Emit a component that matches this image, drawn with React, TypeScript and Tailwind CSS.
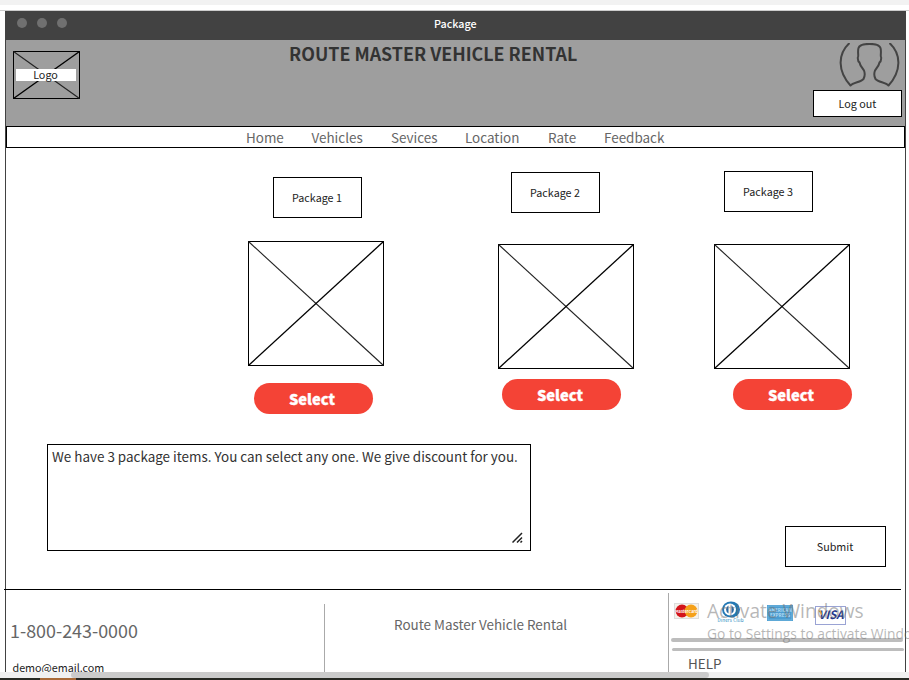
import React from "react";

const CrossBox = ({ className, w, h }: { className: string; w: number; h: number }) => (
  <svg className={className} width={w} height={h} viewBox={`0 0 ${w} ${h}`} fill="none" stroke="#000">
    <rect x="0.5" y="0.5" width={w - 1} height={h - 1} />
    <path d={`M0.5 0.5L${w - 0.5} ${h - 0.5}`} stroke="#222" strokeWidth="1.1" />
    <path d={`M${w - 0.5} 0.5L0.5 ${h - 0.5}`} strokeWidth="1.3" />
  </svg>
);

const packages = [
  { name: "Package 1", col: "ml-[242px] pt-[29px]", label: "ml-[25px]", img: "mt-[23px]", btn: "mt-[17px] ml-[6px]" },
  { name: "Package 2", col: "ml-[114px] pt-[24px]", label: "ml-[13px]", img: "mt-[31px]", btn: "mt-[10px] ml-[4px]" },
  { name: "Package 3", col: "ml-[80px] pt-[23px]", label: "ml-[10px]", img: "mt-[32px]", btn: "mt-[10px] ml-[19px]" },
];

const navItems = [
  { name: "Home", cls: "w-[65.5px]" },
  { name: "Vehicles", cls: "w-[79.5px]" },
  { name: "Sevices", cls: "w-[74px]" },
  { name: "Location", cls: "w-[83px]" },
  { name: "Rate", cls: "w-[56px]" },
  { name: "Feedback", cls: "w-[70px]" },
];

const TitleBar = () => (
  <div className="flex h-[29px] items-start bg-[#424242] pl-[10.5px] pt-[7px]">
    <div className="flex gap-[10px]">
      <i className="size-[10px] rounded-full bg-[#707070]" />
      <i className="size-[10px] rounded-full bg-[#707070]" />
      <i className="size-[10px] rounded-full bg-[#707070]" />
    </div>
    <div className="ml-[367.5px] -mt-[3px] h-[18px] text-[10.75px] font-medium leading-[18px] text-white">Package</div>
  </div>
);

const Header = () => (
  <header className="flex h-[86px] bg-[#9e9e9e]">
    <div className="relative ml-[7px] mt-[11px] h-[48px] w-[67px]">
      <CrossBox className="block" w={67} h={48} />
      <div className="absolute left-[3px] top-[18px] h-[12px] w-[60px] bg-white pr-[1px] text-center text-[10.75px] leading-[12px] text-[#222]">Logo</div>
    </div>
    <h1 className="mt-[1px] ml-[209px] h-[24px] text-[17.85px] font-bold leading-[24px] text-[#333]">ROUTE MASTER VEHICLE RENTAL</h1>
    <div className="mr-[3px] ml-auto flex w-[89px] flex-col">
      <svg className="ml-[26px] mt-[3px] block" width="61" height="44" viewBox="0 0 61 44" fill="none" stroke="#444" strokeWidth="2" strokeLinejoin="round">
        <path d="M10.500 0C-1.500 11-1.500 28 11.500 42.500C14 39.500 22 39 24.500 36C25.500 34 26 30 25 27.500C23 24.500 21 22.500 20.500 19.500C18.500 18.500 19 16.500 18.800 14.500C20 13 18.300 9 19.500 5C20.500 1.500 25 0.900 30.500 0.900C36 0.900 40.500 1.500 41.500 5C42.700 9 41 13 42.200 14.500C42 16.500 42.500 18.500 40.500 19.500C40 22.500 38 24.500 36 27.500C35 30 35.500 34 36.500 36C39 39 47 39.500 49.500 42.500C62.500 28 62.500 11 50.500 0" />
      </svg>
      <button className="mt-[3px] h-[27px] w-[89px] border border-black bg-white text-[10.75px] leading-[24px] text-[#222]">Log out</button>
    </div>
  </header>
);

const Cards = () => (
  <svg className="ml-[5px] block" width="180" height="26" viewBox="0 0 180 26">
    <rect x="0.500" y="2.500" width="24" height="15" fill="#f5f1ea" stroke="#ddd" />
    <circle cx="8" cy="10" r="6.500" fill="#d3141b" />
    <circle cx="17" cy="10" r="6.500" fill="#f5a11a" />
    <text x="12.500" y="11.500" fontSize="4" fontWeight="bold" fill="#fff" textAnchor="middle">MasterCard</text>
    <ellipse cx="57" cy="8.500" rx="9" ry="8" fill="#2479b5" />
    <circle cx="56" cy="8.500" r="6" fill="#fff" />
    <path d="M54.500 4.500A4.500 4.500 0 0 0 54.500 12.500ZM57.500 4.500A4.500 4.500 0 0 1 57.500 12.500Z" fill="#2868a0" />
    <text x="56.500" y="20.500" fontSize="4.500" fill="#258ac0" textAnchor="middle" textLength="26">Diners Club</text>
    <rect x="93" y="4" width="26" height="16" fill="#4b9dd1" />
    <rect x="94" y="5" width="24" height="14" fill="none" stroke="#83bfe2" strokeWidth="0.700" />
    <text x="106" y="11" fontSize="4.500" fontWeight="bold" fill="#b9def1" textAnchor="middle">AMERICAN</text>
    <text x="106" y="16" fontSize="4.500" fontWeight="bold" fill="#b9def1" textAnchor="middle">EXPRESS</text>
    <rect x="141.500" y="5.500" width="30" height="18" fill="#fff" stroke="#9aa3d4" />
    <text x="157" y="18" fontSize="11.500" fontWeight="bold" fontStyle="italic" fill="#25378d" textAnchor="middle" textLength="25" lengthAdjust="spacingAndGlyphs">VISA</text>
    <path d="M144 9.500L147 9.500L148.500 15Z" fill="#e9a33a" />
  </svg>
);

export default function App() {
  return (
    <div className="relative flex h-[680px] w-[909px] flex-col overflow-hidden whitespace-nowrap bg-white font-['Noto_Sans_CJK_SC',sans-serif]">
      <div className="h-[5px] shrink-0 bg-[#f2f2f2]" />
      <div className="mt-[5px] h-px shrink-0 bg-[#ccc]" />
      <div className="ml-[5px] flex h-[661px] w-[901px] shrink-0 flex-col border-x border-[#424242]">
        <TitleBar />
        <Header />
        <nav className="flex h-[22px] border border-black pl-[239px] text-[13.45px] leading-[21px] text-[#666]">
          {navItems.map((n) => (
            <a key={n.name} className={`${n.cls} shrink-0`}>{n.name}</a>
          ))}
        </nav>
        <main className="flex h-[441px] flex-col">
          <section className="flex h-[296px] items-start">
            {packages.map((p) => (
              <div key={p.name} className={`${p.col} w-[136px] shrink-0`}>
                <div className={`${p.label} flex h-[41px] w-[89px] items-center justify-center border border-black pr-[1px] pt-[2px] text-[10.75px] text-[#222]`}>{p.name}</div>
                <CrossBox className={`${p.img} block`} w={136} h={125} />
                <button className={`${p.btn} block h-[31px] w-[119px] rounded-full bg-[#f44336] pr-[3px] text-[14.7px] font-black leading-[31px] text-white [-webkit-text-stroke:0.3px_white]`}>Select</button>
              </div>
            ))}
          </section>
          <section className="flex items-start">
            <div className="ml-[41px] flex h-[107px] w-[484px] flex-col justify-between border border-black pl-[4px] text-[13.45px] leading-[23px] text-[#333]">
              <p>We have 3 package items. You can select any one. We give discount for you.</p>
              <svg className="mb-[7px] mr-[7px] self-end" width="11" height="11" viewBox="0 0 11 11" stroke="#222" strokeWidth="1.500">
                <path d="M0.500 10.500L10 1M5 10.500L10 5.500M8.500 10.500L10 9" />
              </svg>
            </div>
            <button className="ml-[254px] mt-[82px] h-[41px] w-[101px] border border-black pr-[1px] pt-[2px] text-[10.75px] text-[#222]">Submit</button>
          </section>
        </main>
        <footer className="-ml-[2px] flex h-[83px] w-[903px] flex-col">
          <div className="h-px w-[897px] bg-black" />
          <div className="flex h-[82px]">
            <div className="w-[320px] pl-[6px] pt-[26px]">
              <div className="h-[28px] text-[17.9px] leading-[28px] text-[#666]">1-800-243-0000</div>
              <div className="ml-[2.5px] mt-[14px] h-[20px] text-[10.75px] leading-[20px] text-[#222]">demo@email.com</div>
            </div>
            <div className="mt-[14px] h-[68px] w-px bg-[#aaa]" />
            <div className="w-[343px] pl-[69px] pt-[23px] text-[13.45px] leading-[23px] text-[#666]">Route Master Vehicle Rental</div>
            <div className="mt-[3px] h-[79px] w-px bg-[#aaa]" />
            <div className="w-[238px] pt-[11px]">
              <Cards />
              <div className="ml-[2px] mt-[11px] h-[4px] w-[232px] rounded-full bg-[#bdbdbd]" />
              <div className="ml-[3px] mt-[6px] h-[3px] w-[232px] rounded-full bg-[#bdbdbd]" />
              <div className="ml-[19px] mt-[1px] h-[22px] text-[13.45px] leading-[22px] text-[#555]">HELP</div>
            </div>
          </div>
        </footer>
      </div>
      <div className="z-10 h-[6px] shrink-0 bg-[#f0f0f0]">
        <div className="ml-[71px] h-[6px] w-[638px] rounded-l-full rounded-r-full bg-[#cbcbcb]" />
      </div>
      <div className="z-10 h-[2px] shrink-0 bg-[#272923]">
        <div className="ml-[40px] h-[2px] w-[36px] bg-[#a96a38]" />
      </div>
      <div className="absolute left-[707px] top-[599px] font-['Open_Sans','Noto_Sans',sans-serif] text-[#707070]/50">
        <div className="h-[24px] text-[19.1px] leading-[24px]">Activate Windows</div>
        <div className="h-[21px] text-[13.8px] leading-[21px]">Go to Settings to activate Windows.</div>
      </div>
    </div>
  );
}
